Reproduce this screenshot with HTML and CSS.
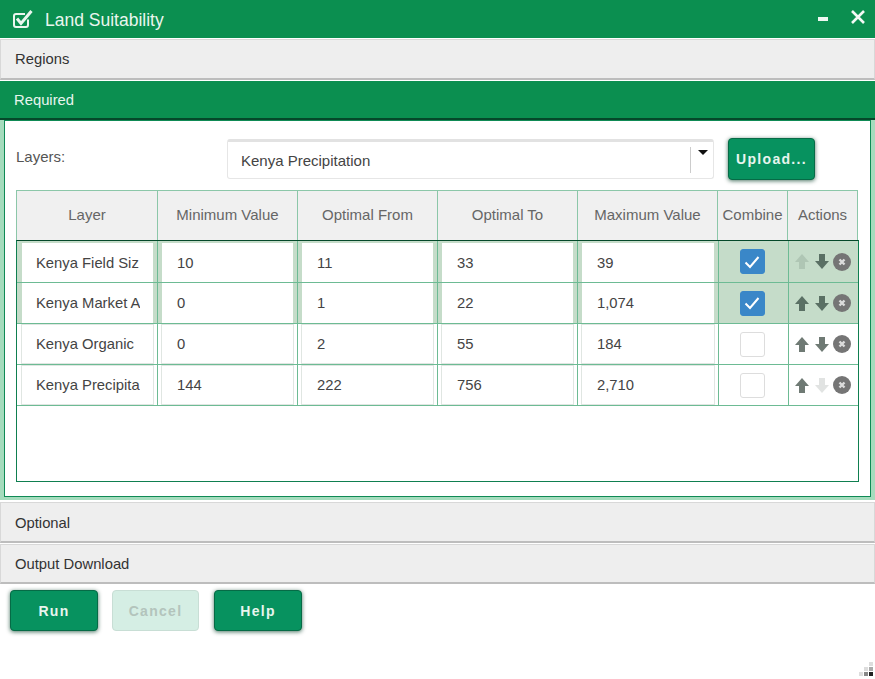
FILE: index.html
```html
<!DOCTYPE html>
<html lang="en">
<head>
    <meta charset="UTF-8">
    <title>Land Suitability</title>
    <link rel="stylesheet" href="styles.css">
</head>
<body>
    <div class="window">
        <header class="title-bar">
            <svg class="title-icon" width="20" height="20" viewBox="0 0 20 20" fill="none">
                <path d="M15 10.5V16a2 2 0 0 1-2 2H3a2 2 0 0 1-2-2V7a2 2 0 0 1 2-2h9" stroke="#eaf6ef" stroke-width="2"/>
                <path d="M4 9.5l4 5L18.5 2" stroke="#eaf6ef" stroke-width="3"/>
            </svg>
            <h1>Land Suitability</h1>
            <span class="min-btn"></span>
            <svg class="close-btn" width="16" height="16" viewBox="0 0 16 16">
                <path d="M2 2l12 12M14 2L2 14" stroke="#f2f9f5" stroke-width="2.6"/>
            </svg>
        </header>

        <div class="section-head">Regions</div>
        <div class="section-head active">Required</div>

        <section class="panel">
            <div class="layer-picker">
                <label class="layer-label">Layers:</label>
                <div class="select-box">
                    <span class="select-text">Kenya Precipitation</span>
                    <span class="select-arrow"></span>
                </div>
                <button class="btn upload">Upload...</button>
            </div>

            <div class="grid-head">
                <div>Layer</div>
                <div>Minimum Value</div>
                <div>Optimal From</div>
                <div>Optimal To</div>
                <div>Maximum Value</div>
                <div>Combine</div>
                <div>Actions</div>
            </div>

            <div class="grid-body">
                <div class="grid-row selected">
                    <div class="cell"><span class="value name">Kenya Field Siz</span></div>
                    <div class="cell"><span class="value">10</span></div>
                    <div class="cell"><span class="value">11</span></div>
                    <div class="cell"><span class="value">33</span></div>
                    <div class="cell"><span class="value">39</span></div>
                    <div class="cell center"><span class="check on"><svg width="16" height="14" viewBox="0 0 16 14"><path d="M1.5 7.5l4.5 4.5 8.5-10" fill="none" stroke="#fff" stroke-width="2"/></svg></span></div>
                    <div class="cell actions">
                        <svg class="arrow off" width="14" height="15" viewBox="0 0 14 15"><path d="M7 0l7 8h-4v7H4V8H0z"/></svg>
                        <svg class="arrow" width="14" height="15" viewBox="0 0 14 15"><path d="M7 15L0 7h4V0h6v7h4z"/></svg>
                        <svg class="remove" width="18" height="18" viewBox="0 0 18 18"><circle cx="9" cy="9" r="9"/><path d="M6.5 6.5l5 5M11.5 6.5l-5 5"/></svg>
                    </div>
                </div>
                <div class="grid-row selected">
                    <div class="cell"><span class="value name">Kenya Market A</span></div>
                    <div class="cell"><span class="value">0</span></div>
                    <div class="cell"><span class="value">1</span></div>
                    <div class="cell"><span class="value">22</span></div>
                    <div class="cell"><span class="value">1,074</span></div>
                    <div class="cell center"><span class="check on"><svg width="16" height="14" viewBox="0 0 16 14"><path d="M1.5 7.5l4.5 4.5 8.5-10" fill="none" stroke="#fff" stroke-width="2"/></svg></span></div>
                    <div class="cell actions">
                        <svg class="arrow" width="14" height="15" viewBox="0 0 14 15"><path d="M7 0l7 8h-4v7H4V8H0z"/></svg>
                        <svg class="arrow" width="14" height="15" viewBox="0 0 14 15"><path d="M7 15L0 7h4V0h6v7h4z"/></svg>
                        <svg class="remove" width="18" height="18" viewBox="0 0 18 18"><circle cx="9" cy="9" r="9"/><path d="M6.5 6.5l5 5M11.5 6.5l-5 5"/></svg>
                    </div>
                </div>
                <div class="grid-row">
                    <div class="cell"><span class="value name">Kenya Organic</span></div>
                    <div class="cell"><span class="value">0</span></div>
                    <div class="cell"><span class="value">2</span></div>
                    <div class="cell"><span class="value">55</span></div>
                    <div class="cell"><span class="value">184</span></div>
                    <div class="cell center"><span class="check"></span></div>
                    <div class="cell actions">
                        <svg class="arrow" width="14" height="15" viewBox="0 0 14 15"><path d="M7 0l7 8h-4v7H4V8H0z"/></svg>
                        <svg class="arrow" width="14" height="15" viewBox="0 0 14 15"><path d="M7 15L0 7h4V0h6v7h4z"/></svg>
                        <svg class="remove" width="18" height="18" viewBox="0 0 18 18"><circle cx="9" cy="9" r="9"/><path d="M6.5 6.5l5 5M11.5 6.5l-5 5"/></svg>
                    </div>
                </div>
                <div class="grid-row">
                    <div class="cell"><span class="value name">Kenya Precipita</span></div>
                    <div class="cell"><span class="value">144</span></div>
                    <div class="cell"><span class="value">222</span></div>
                    <div class="cell"><span class="value">756</span></div>
                    <div class="cell"><span class="value">2,710</span></div>
                    <div class="cell center"><span class="check"></span></div>
                    <div class="cell actions">
                        <svg class="arrow" width="14" height="15" viewBox="0 0 14 15"><path d="M7 0l7 8h-4v7H4V8H0z"/></svg>
                        <svg class="arrow off" width="14" height="15" viewBox="0 0 14 15"><path d="M7 15L0 7h4V0h6v7h4z"/></svg>
                        <svg class="remove" width="18" height="18" viewBox="0 0 18 18"><circle cx="9" cy="9" r="9"/><path d="M6.5 6.5l5 5M11.5 6.5l-5 5"/></svg>
                    </div>
                </div>
            </div>
        </section>

        <div class="section-head optional">Optional</div>
        <div class="section-head last">Output Download</div>

        <footer class="button-bar">
            <button class="btn run">Run</button>
            <button class="btn cancel" disabled>Cancel</button>
            <button class="btn help">Help</button>
        </footer>

        <div class="grip">
            <i class="g1"></i><i class="g2"></i><i class="g3"></i>
            <i class="g4"></i><i class="g5"></i><i class="g6"></i>
        </div>
    </div>
</body>
</html>
```

FILE: styles.css
```css
* {
    box-sizing: border-box;
}

html, body {
    margin: 0;
    height: 100%;
    overflow: hidden;
}

body {
    font-family: "Liberation Sans", Arial, sans-serif;
    font-size: 14.8px;
    color: #333;
    background: #fff;
}

.window {
    position: relative;
    width: 875px;
    height: 679px;
}

/* Title bar */
.title-bar {
    position: relative;
    display: flex;
    align-items: center;
    height: 38px;
    margin-bottom: 1px;
    padding-left: 13px;
    background-color: #0b8f50;
}

.title-icon {
    flex: none;
}

.title-bar h1 {
    margin: 2px 0 0 12px;
    font-size: 17.5px;
    font-weight: normal;
    color: #eaf6ef;
}

.min-btn {
    position: absolute;
    top: 17px;
    left: 818px;
    width: 10px;
    height: 4px;
    background-color: #eef8f2;
}

.close-btn {
    position: absolute;
    top: 9px;
    left: 850px;
}

/* Accordion heads */
.section-head {
    height: 41px;
    margin-bottom: 1px;
    padding: 0 14px;
    line-height: 39px;
    background-color: #eeeeee;
    border: 1px solid #d8d8d8;
    border-bottom: 2px solid #bdbdbd;
    color: #333;
}

.section-head.active {
    height: 39px;
    margin-bottom: 0;
    line-height: 39px;
    color: #e8f5ee;
    background-color: #0b8f50;
    border: none;
    border-bottom: 2px solid #05482a;
}

.section-head.optional {
    line-height: 41px;
}

.section-head.last {
    height: 40px;
    margin-bottom: 0;
    line-height: 38px;
}

/* Required panel */
.panel {
    height: 380px;
    margin-bottom: 2px;
    padding: 18px 12px 0 12px;
    background-color: #fff;
    border: 4px solid #a5dcbd;
    border-top: 0;
    border-bottom-width: 3px;
    box-shadow: inset 0 0 0 1px #0f8a55;
}

.layer-picker {
    display: flex;
    align-items: center;
    height: 42px;
    margin-bottom: 10px;
}

.layer-label {
    width: 211px;
    margin-top: -6px;
    color: #555;
    font-size: 15px;
}

.select-box {
    position: relative;
    display: flex;
    align-items: center;
    width: 487px;
    height: 40px;
    padding-left: 13px;
    border: 1px solid #e6e6e6;
    border-top: 3px solid #e2e2e2;
    border-radius: 3px;
    color: #444;
    font-size: 15px;
}

.select-arrow {
    position: absolute;
    top: 5px;
    right: 0;
    width: 23px;
    height: 26px;
    border-left: 1px solid #ccc;
}

.select-arrow::after {
    content: "";
    position: absolute;
    top: 3px;
    left: 7px;
    border-left: 5px solid transparent;
    border-right: 5px solid transparent;
    border-top: 5px solid #111;
}

.btn {
    font-family: inherit;
    font-size: 14px;
    font-weight: bold;
    letter-spacing: 1.3px;
    color: #e8f5ee;
    background-color: #07925f;
    border: 1px solid #066b46;
    border-radius: 4px;
    box-shadow: 0 1px 4px rgba(0, 60, 35, 0.7);
}

.upload {
    width: 87px;
    height: 42px;
    margin-left: 14px;
    padding: 0;
}

/* Grid */
.grid-head {
    display: grid;
    grid-template-columns: 142px 140px 140px 140px 140px 70px 70px;
    width: 842px;
    height: 50px;
    background-color: #f0f0f0;
    border-top: 1px solid #8cc7a9;
}

.grid-head div {
    display: flex;
    align-items: center;
    justify-content: center;
    padding-bottom: 2px;
    color: #666;
    font-size: 15px;
    border-right: 1px solid #8cc7a9;
}

.grid-head div:first-child {
    border-left: 1px solid #8cc7a9;
}

.grid-body {
    width: 843px;
    height: 242px;
    background-color: #fff;
    border: 1px solid #0f7f50;
    border-top: 1px solid #05482a;
}

.grid-row {
    display: grid;
    grid-template-columns: 141px 140px 140px 140px 141px 70px 70px;
    height: 41px;
    border-bottom: 1px solid #6dbb94;
}

.grid-row:first-child {
    height: 42px;
}

.grid-row:first-child .cell:not(.center):not(.actions) {
    padding-top: 2px;
}

.grid-row.selected {
    background-color: #c5dcc9;
}

.cell {
    display: flex;
    align-items: stretch;
    min-width: 0;
    padding: 0 4px 0 4px;
    border-right: 1px solid #6dbb94;
}

.cell:first-child {
    padding-left: 5px;
}

.value {
    display: flex;
    align-items: center;
    flex: 1;
    min-width: 0;
    margin: 1px 0;
    padding-left: 15px;
    background-color: #fff;
    white-space: nowrap;
    overflow: hidden;
    color: #444;
    box-shadow: 0 0 0 1px #e0e6e2;
}

.value.name {
    padding-left: 14px;
    border-right: 13px solid #fff;
}

.selected .value {
    margin: 0;
    box-shadow: none;
}

.center {
    align-items: center;
    justify-content: center;
    padding: 0 3px 0 0;
}

.check {
    display: flex;
    align-items: center;
    justify-content: center;
    width: 25px;
    height: 25px;
    background-color: #fff;
    border: 1px solid #ddd;
    border-radius: 3px;
}

.check.on {
    background-color: #3a87c8;
    border-color: #3a87c8;
}

.actions {
    align-items: center;
    padding: 0 0 0 6px;
    border-right: 0;
}

.arrow {
    margin-right: 6px;
    fill: #6f7a74;
}

.arrow + .arrow {
    margin-right: 4px;
}

.arrow.off {
    opacity: 0.2;
}

.selected .arrow {
    fill: #5a7064;
}

.remove circle {
    fill: #757575;
}

.remove path {
    stroke: #dcdcdc;
    stroke-width: 2.4;
}

/* Bottom buttons */
.button-bar {
    display: flex;
    padding: 6px 0 0 10px;
}

.run,
.help {
    width: 88px;
    height: 41px;
}

.cancel {
    width: 87px;
    height: 41px;
    margin: 0 15px 0 14px;
    color: #b3c4bc;
    background-color: #d5eee4;
    border-color: #c8ded5;
    box-shadow: none;
}

/* Resize grip */
.grip {
    position: absolute;
    right: 2px;
    bottom: 3px;
    display: grid;
    grid-template-columns: repeat(3, 4px);
    grid-template-rows: repeat(3, 4px);
    gap: 1px;
}

.grip .g1 { grid-area: 1 / 3; background-color: #ddd; }
.grip .g2 { grid-area: 2 / 2; background-color: #ddd; }
.grip .g3 { grid-area: 2 / 3; background-color: #aaa; }
.grip .g4 { grid-area: 3 / 1; background-color: #ddd; }
.grip .g5 { grid-area: 3 / 2; background-color: #888; }
.grip .g6 { grid-area: 3 / 3; background-color: #222; }
```
